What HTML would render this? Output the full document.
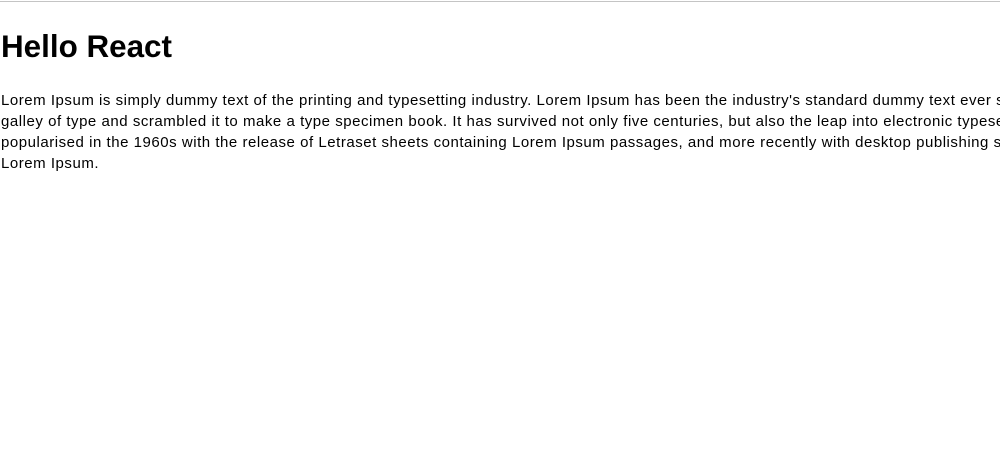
<!DOCTYPE html>
<html><head><style>
html,body{margin:0;padding:0;width:1000px;height:460px;overflow:hidden;background:#fff;}
.bar{height:1px;background:#c4c4c4;margin-top:1px;}
h1{font-family:"Liberation Sans",sans-serif;font-weight:bold;font-size:31.4px;margin:0;position:absolute;left:1px;top:29px;line-height:36px;color:#000;}
.p{position:absolute;left:1px;top:90px;width:999px;overflow:hidden;font-family:"Liberation Sans",sans-serif;font-size:15px;line-height:21px;color:#000;white-space:nowrap;letter-spacing:0.53px;}
</style></head><body>
<div class="bar"></div>
<h1>Hello React</h1>
<div class="p">
Lorem Ipsum is simply dummy text of the printing and typesetting industry. Lorem Ipsum has been the industry's standard dummy text ever si<br>
galley of type and scrambled it to make a type specimen book. It has survived not only five centuries, but also the leap into electronic typesett<br>
popularised in the 1960s with the release of Letraset sheets containing Lorem Ipsum passages, and more recently with desktop publishing soft<br>
Lorem Ipsum.
</div>
</body></html>
